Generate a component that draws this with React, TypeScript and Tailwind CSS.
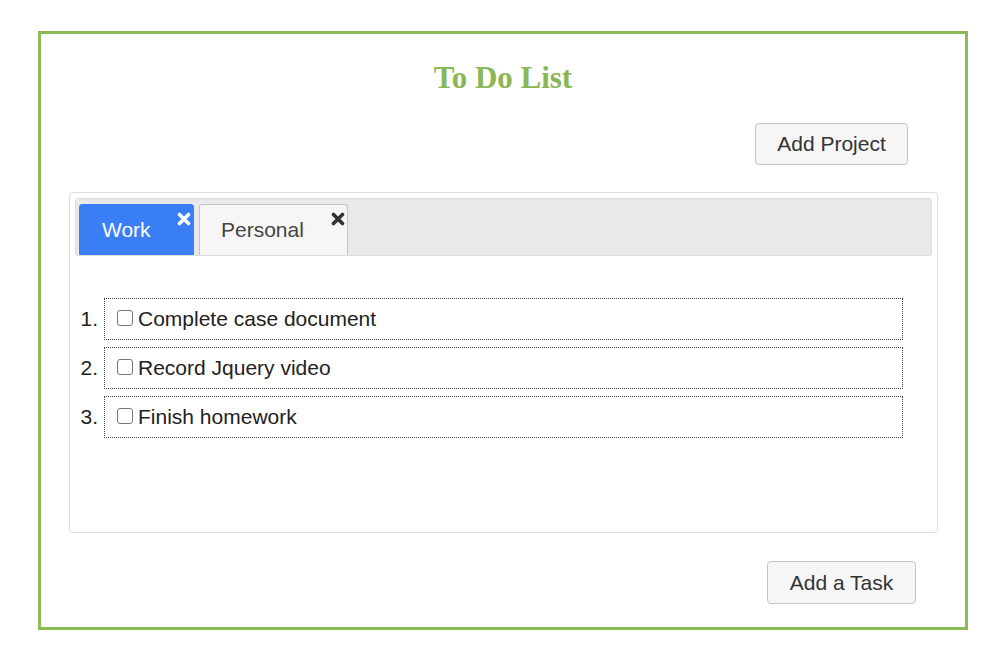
import React from "react";

const XIcon = ({ color }: { color: string }) => (
  <svg width="14" height="14" viewBox="0 0 14 14">
    <path d="M2.5 2.5 L11.5 11.5 M11.5 2.5 L2.5 11.5" stroke={color} strokeWidth="3.6" strokeLinecap="round" />
  </svg>
);

const tasks = ["Complete case document", "Record Jquery video", "Finish homework"];

export default function App() {
  return (
    <div className="w-[1000px] h-[667px] bg-white pt-[31px] pl-[38px]" style={{ fontFamily: '"Liberation Sans", Arial, sans-serif' }}>
      <div className="w-[930px] h-[599px] border-[3px] border-[#8bbb57] flex flex-col">
        <h1
          className="text-center text-[31px] font-bold text-[#8ab654] leading-none mt-[28px]"
          style={{ fontFamily: '"Liberation Serif", "Times New Roman", serif' }}
        >
          To Do List
        </h1>
        <div className="flex justify-end pr-[57px] mt-[30px]">
          <button className="w-[153px] h-[42px] bg-[#f6f6f6] border border-[#c5c5c5] rounded-[4px] text-[21px] text-[#333]">
            Add Project
          </button>
        </div>
        <div className="ml-[28px] mt-[27px] w-[869px] h-[341px] border border-[#dddddd] rounded-[4px] p-[5px] flex flex-col">
          <div className="h-[58px] bg-[#e9e9e9] border border-[#dddddd] rounded-[3px] flex items-end pl-[3px] gap-[5px]">
            <div className="relative w-[115px] h-[51px] bg-[#3a7ef5] border border-[#3a7ef5] rounded-t-[3px] text-white text-[21px] flex items-center pl-[22px]">
              Work
              <span className="absolute right-[2px] top-[7px]">
                <XIcon color="#ffffff" />
              </span>
            </div>
            <div className="relative w-[149px] h-[51px] bg-[#f6f6f6] border border-b-0 border-[#c5c5c5] rounded-t-[3px] text-[#454545] text-[21px] flex items-center pl-[21px]">
              Personal
              <span className="absolute right-[2px] top-[7px]">
                <XIcon color="#333333" />
              </span>
            </div>
          </div>
          <ol className="mt-[42px] flex flex-col gap-[7px]">
            {tasks.map((t, i) => (
              <li key={t} className="flex items-center">
                <span className="w-[29px] text-right text-[21px] text-[#222] pr-[6px]">{i + 1}.</span>
                <div className="w-[799px] h-[42px] border border-dotted border-[#444] flex items-center pl-[12px] text-[21px] text-[#222]">
                  <span className="w-[16px] h-[16px] border border-[#767676] rounded-[3px] bg-white mr-[5px] mt-[-3px]" />
                  {t}
                </div>
              </li>
            ))}
          </ol>
        </div>
        <div className="flex justify-end pr-[49px] mt-[28px]">
          <button className="w-[149px] h-[43px] bg-[#f6f6f6] border border-[#c5c5c5] rounded-[4px] text-[21px] text-[#333]">
            Add a Task
          </button>
        </div>
      </div>
    </div>
  );
}
